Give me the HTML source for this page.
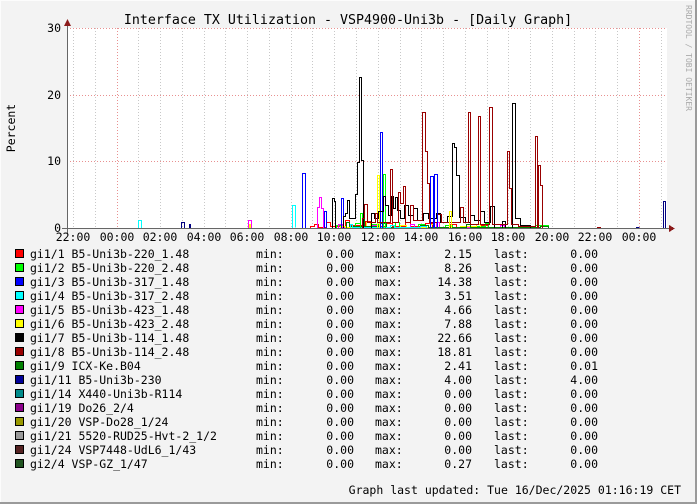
<!DOCTYPE html>
<html><head><meta charset="utf-8"><style>
html,body{margin:0;padding:0;background:#f3f3f3}
svg{display:block}
text{font-family:"DejaVu Sans Mono","Liberation Mono",monospace;font-size:11.5px;fill:#000}
</style></head><body>
<svg width="697" height="504" viewBox="0 0 697 504" xmlns="http://www.w3.org/2000/svg" shape-rendering="crispEdges">
<rect x="0" y="0" width="697" height="504" fill="#f3f3f3"/>
<rect x="0" y="0" width="697" height="1" fill="#fcfcfc"/>
<rect x="0" y="0" width="1" height="504" fill="#fcfcfc"/>
<rect x="695" y="0" width="2" height="504" fill="#9a9a9a"/>
<rect x="0" y="502" width="697" height="2" fill="#9a9a9a"/>
<text x="348" y="24" text-anchor="middle" style="font-size:13.3px">Interface TX Utilization - VSP4900-Uni3b - [Daily Graph]</text>
<text transform="translate(686,5) rotate(90)" style="font-size:8px;fill:#aaa">RRDTOOL / TOBI OETIKER</text>
<text transform="translate(15,128) rotate(-90)" text-anchor="middle">Percent</text>
<rect x="67" y="28" width="600" height="200" fill="#fff"/>
<g stroke="#c8c8c8" stroke-dasharray="1,2" fill="none">
<path d="M73.5 28V228M95.5 28V228M138.5 28V228M160.5 28V228M182.5 28V228M204.5 28V228M225.5 28V228M247.5 28V228M269.5 28V228M291.5 28V228M312.5 28V228M334.5 28V228M356.5 28V228M378.5 28V228M400.5 28V228M421.5 28V228M443.5 28V228M465.5 28V228M487.5 28V228M508.5 28V228M530.5 28V228M552.5 28V228M574.5 28V228M595.5 28V228M617.5 28V228M661.5 28V228"/>
</g>
<g stroke="#e89090" stroke-dasharray="1,2" fill="none">
<path d="M117.5 28V228M639.5 28V228M67 28.5H667M67 95.5H667M67 161.5H667"/>
</g>
<g fill="none" stroke-width="1" transform="translate(0.5,0.5)">
<polyline stroke="#ff0000" points="300,228 310,228 310,226 314,226 314,224 318,224 318,227 326,227 326,222 330,222 330,226 345,226 345,220 349,220 349,225 365,225 365,221 370,221 370,226 385,226 385,223 392,223 392,226 405,226 405,222 410,222 410,226 425,226 425,223 432,223 432,227 450,227 450,224 456,224 456,227 480,227 480,225 488,225 488,227 520,227 520,226 530,226 530,228"/>
<polyline stroke="#00ff00" points="300,228 336,228 336,225 340,225 340,227 355,227 355,223 360,223 360,226 372,226 372,224 378,224 378,227 395,227 395,222 399,222 399,227 418,227 418,224 424,224 424,227 445,227 445,225 452,225 452,227 470,227 470,226 485,226 485,223 488,223 488,227 512,227 512,224 518,224 518,227 535,227 535,225 548,225 548,228"/>
<polyline stroke="#ff00ff" points="330,228 338,228 338,224 342,224 342,227 370,227 370,225 376,225 376,227 410,227 410,224 414,224 414,227 436,227 436,222 439,222 439,227 500,227 500,225 504,225 504,228"/>
<polyline stroke="#ffff00" points="335,228 340,228 340,226 345,226 345,227 366,227 366,222 370,222 370,227 400,227 400,225 406,225 406,227 430,227 430,224 434,224 434,227 460,227 460,226 476,226 476,224 480,224 480,228"/>
<polyline stroke="#008000" points="340,228 346,228 346,222 349,222 349,226 362,226 362,218 364,218 364,226 380,226 380,223 386,223 386,227 420,227 420,225 428,225 428,227 466,227 466,224 470,224 470,227 540,227 540,226 548,226 548,228"/>
<polyline stroke="#00ffff" points="345,228 350,228 350,224 352,224 352,227 390,227 390,225 394,225 394,227 420,227 420,226 426,226 426,228"/>
<polyline stroke="#00ffff" points="138,228 138,220 141,220 141,228"/>
<polyline stroke="#000080" points="181,228 181,222 184,222 184,228 189,228 189,224 190,224 190,228"/>
<polyline stroke="#ff00ff" points="248,228 248,220 251,220 251,228"/>
<polyline stroke="#ffff00" points="249,228 249,224 250,224 250,228"/>
<polyline stroke="#00ffff" points="292,228 292,205 295,205 295,227"/>
<polyline stroke="#0000ff" points="302,228 302,173 305,173 305,228"/>
<polyline stroke="#ff00ff" points="317,228 317,207 319,207 319,197 321,197 321,208 323,208 323,228"/>
<polyline stroke="#0000ff" points="324,228 324,211 326,211 326,228 341,228 341,198 343,198 343,228"/>
<polyline stroke="#000" points="332,228 332,198 334,198 334,201 335,201 335,228"/>
<polyline stroke="#000" points="343,228 343,216 345,216 345,213 347,213 347,200 349,200 349,218 355,218 355,194 357,194 357,162 359,162 359,77 361,77 361,160 363,160 363,228"/>
<polyline stroke="#00ff00" points="360,228 360,213 362,213 362,228 383,228 383,174 385,174 385,228"/>
<polyline stroke="#ffff00" points="377,228 377,175 379,175 379,228"/>
<polyline stroke="#0000ff" points="380,228 380,132 382,132 382,228"/>
<polyline stroke="#000" points="371,228 371,213 374,213 374,218 378,218 378,211 383,211 383,196 385,196 385,205 388,205 388,215 391,215 391,196 393,196 393,208 395,208 395,197 397,197 397,210 400,210 400,218 404,218 404,205 408,205 408,215 413,215 413,208 417,208 417,220 423,220 423,213 428,213 428,218 436,218 436,213 440,213 440,222 447,222 447,216 452,216 452,143 454,143 454,147 456,147 456,175 459,175 459,217 465,217 465,222 470,222 470,215 474,215 474,220 480,220 480,211 484,211 484,222 490,222 490,206 494,206 494,228 502,228 502,221 505,221 505,228 512,228 512,103 515,103 515,218 520,218 520,225 530,225 530,228"/>
<polyline stroke="#990000" points="362,228 362,218 364,218 364,204 367,204 367,222 375,222 375,213 377,213 377,222 390,222 390,169 392,169 392,222 398,222 398,192 400,192 400,203 403,203 403,186 405,186 405,222 410,222 410,205 413,205 413,220 422,220 422,112 425,112 425,151 427,151 427,183 429,183 429,222 437,222 437,214 441,214 441,222 460,222 460,207 463,207 463,222 468,222 468,112 470,112 470,224 478,224 478,116 480,116 480,224 489,224 489,107 492,107 492,224 507,224 507,151 509,151 509,188 511,188 511,224 518,224 518,226 535,226 535,136 537,136 537,228 538,228 538,165 540,165 540,185 542,185 542,228 597,228 597,227 600,227 600,228"/>
<polyline stroke="#0000ff" points="430,228 430,176 433,176 433,228 434,228 434,174 437,174 437,228"/>
<polyline stroke="#ffff00" points="449,228 449,211 451,211 451,228"/>
<polyline stroke="#000080" points="663,228 663,201 665,201 665,228 636,228 636,227 639,227"/>
</g>
<line x1="67.5" y1="22" x2="67.5" y2="233" stroke="#666"/>
<line x1="62" y1="228.5" x2="670" y2="228.5" stroke="#666"/>
<polygon points="64,26 71,26 67.5,19" fill="#8b1a1a"/>
<polygon points="669,225 669,232 675,228.5" fill="#8b1a1a"/>
<g text-anchor="end">
<text x="61" y="32">30</text><text x="61" y="99">20</text><text x="61" y="165">10</text><text x="61" y="232">0</text>
</g>
<g text-anchor="middle">
<text x="73" y="241">22:00</text><text x="117" y="241">00:00</text><text x="160" y="241">02:00</text><text x="204" y="241">04:00</text><text x="247" y="241">06:00</text><text x="291" y="241">08:00</text><text x="334" y="241">10:00</text><text x="378" y="241">12:00</text><text x="421" y="241">14:00</text><text x="465" y="241">16:00</text><text x="508" y="241">18:00</text><text x="552" y="241">20:00</text><text x="595" y="241">22:00</text><text x="639" y="241">00:00</text>
</g>
<g stroke="#000">
<rect x="15.5" y="249.5" width="8" height="8" fill="#ff0000"/>
<rect x="15.5" y="263.5" width="8" height="8" fill="#00ff00"/>
<rect x="15.5" y="277.5" width="8" height="8" fill="#0000ff"/>
<rect x="15.5" y="291.5" width="8" height="8" fill="#00ffff"/>
<rect x="15.5" y="305.5" width="8" height="8" fill="#ff00ff"/>
<rect x="15.5" y="319.5" width="8" height="8" fill="#ffff00"/>
<rect x="15.5" y="333.5" width="8" height="8" fill="#000000"/>
<rect x="15.5" y="347.5" width="8" height="8" fill="#990000"/>
<rect x="15.5" y="361.5" width="8" height="8" fill="#008000"/>
<rect x="15.5" y="375.5" width="8" height="8" fill="#000099"/>
<rect x="15.5" y="389.5" width="8" height="8" fill="#008b8b"/>
<rect x="15.5" y="403.5" width="8" height="8" fill="#8b008b"/>
<rect x="15.5" y="417.5" width="8" height="8" fill="#999900"/>
<rect x="15.5" y="431.5" width="8" height="8" fill="#999999"/>
<rect x="15.5" y="445.5" width="8" height="8" fill="#552222"/>
<rect x="15.5" y="459.5" width="8" height="8" fill="#225522"/>
</g>
<g>
<text x="30" y="258">gi1/1 B5-Uni3b-220_1.48</text>
<text x="30" y="272">gi1/2 B5-Uni3b-220_2.48</text>
<text x="30" y="286">gi1/3 B5-Uni3b-317_1.48</text>
<text x="30" y="300">gi1/4 B5-Uni3b-317_2.48</text>
<text x="30" y="314">gi1/5 B5-Uni3b-423_1.48</text>
<text x="30" y="328">gi1/6 B5-Uni3b-423_2.48</text>
<text x="30" y="342">gi1/7 B5-Uni3b-114_1.48</text>
<text x="30" y="356">gi1/8 B5-Uni3b-114_2.48</text>
<text x="30" y="370">gi1/9 ICX-Ke.B04</text>
<text x="30" y="384">gi1/11 B5-Uni3b-230</text>
<text x="30" y="398">gi1/14 X440-Uni3b-R114</text>
<text x="30" y="412">gi1/19 Do26_2/4</text>
<text x="30" y="426">gi1/20 VSP-Do28_1/24</text>
<text x="30" y="440">gi1/21 5520-RUD25-Hvt-2_1/2</text>
<text x="30" y="454">gi1/24 VSP7448-UdL6_1/43</text>
<text x="30" y="468">gi2/4 VSP-GZ_1/47</text>
</g>
<g>
<text x="256" y="258">min:</text><text x="256" y="272">min:</text><text x="256" y="286">min:</text><text x="256" y="300">min:</text><text x="256" y="314">min:</text><text x="256" y="328">min:</text><text x="256" y="342">min:</text><text x="256" y="356">min:</text><text x="256" y="370">min:</text><text x="256" y="384">min:</text><text x="256" y="398">min:</text><text x="256" y="412">min:</text><text x="256" y="426">min:</text><text x="256" y="440">min:</text><text x="256" y="454">min:</text><text x="256" y="468">min:</text>
<text x="375" y="258">max:</text><text x="375" y="272">max:</text><text x="375" y="286">max:</text><text x="375" y="300">max:</text><text x="375" y="314">max:</text><text x="375" y="328">max:</text><text x="375" y="342">max:</text><text x="375" y="356">max:</text><text x="375" y="370">max:</text><text x="375" y="384">max:</text><text x="375" y="398">max:</text><text x="375" y="412">max:</text><text x="375" y="426">max:</text><text x="375" y="440">max:</text><text x="375" y="454">max:</text><text x="375" y="468">max:</text>
<text x="494" y="258">last:</text><text x="494" y="272">last:</text><text x="494" y="286">last:</text><text x="494" y="300">last:</text><text x="494" y="314">last:</text><text x="494" y="328">last:</text><text x="494" y="342">last:</text><text x="494" y="356">last:</text><text x="494" y="370">last:</text><text x="494" y="384">last:</text><text x="494" y="398">last:</text><text x="494" y="412">last:</text><text x="494" y="426">last:</text><text x="494" y="440">last:</text><text x="494" y="454">last:</text><text x="494" y="468">last:</text>
</g>
<g text-anchor="end">
<text x="354" y="258">0.00</text><text x="354" y="272">0.00</text><text x="354" y="286">0.00</text><text x="354" y="300">0.00</text><text x="354" y="314">0.00</text><text x="354" y="328">0.00</text><text x="354" y="342">0.00</text><text x="354" y="356">0.00</text><text x="354" y="370">0.00</text><text x="354" y="384">0.00</text><text x="354" y="398">0.00</text><text x="354" y="412">0.00</text><text x="354" y="426">0.00</text><text x="354" y="440">0.00</text><text x="354" y="454">0.00</text><text x="354" y="468">0.00</text>
<text x="472" y="258">2.15</text><text x="472" y="272">8.26</text><text x="472" y="286">14.38</text><text x="472" y="300">3.51</text><text x="472" y="314">4.66</text><text x="472" y="328">7.88</text><text x="472" y="342">22.66</text><text x="472" y="356">18.81</text><text x="472" y="370">2.41</text><text x="472" y="384">4.00</text><text x="472" y="398">0.00</text><text x="472" y="412">0.00</text><text x="472" y="426">0.00</text><text x="472" y="440">0.00</text><text x="472" y="454">0.00</text><text x="472" y="468">0.27</text>
<text x="598" y="258">0.00</text><text x="598" y="272">0.00</text><text x="598" y="286">0.00</text><text x="598" y="300">0.00</text><text x="598" y="314">0.00</text><text x="598" y="328">0.00</text><text x="598" y="342">0.00</text><text x="598" y="356">0.00</text><text x="598" y="370">0.01</text><text x="598" y="384">4.00</text><text x="598" y="398">0.00</text><text x="598" y="412">0.00</text><text x="598" y="426">0.00</text><text x="598" y="440">0.00</text><text x="598" y="454">0.00</text><text x="598" y="468">0.00</text>
</g>
<text x="681" y="494" text-anchor="end">Graph last updated: Tue 16/Dec/2025 01:16:19 CET</text>
</svg>
</body></html>
